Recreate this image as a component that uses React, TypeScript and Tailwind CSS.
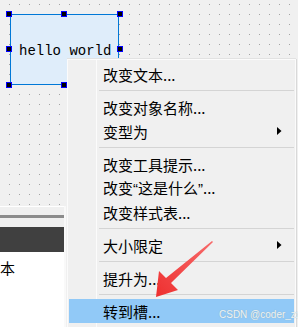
import React from "react";

type MenuEntry = { kind: "item"; label: React.ReactNode; submenu?: boolean; active?: boolean } | { kind: "sep" };

const q = "font-['Liberation_Sans',sans-serif]";

const menu: MenuEntry[] = [
  { kind: "item", label: "改变文本..." },
  { kind: "sep" },
  { kind: "item", label: "改变对象名称..." },
  { kind: "item", label: "变型为", submenu: true },
  { kind: "sep" },
  { kind: "item", label: "改变工具提示..." },
  {
    kind: "item",
    label: (
      <>
        改变<span className={q}>“</span>这是什么<span className={q}>”</span>...
      </>
    ),
  },
  { kind: "item", label: "改变样式表..." },
  { kind: "sep" },
  { kind: "item", label: "大小限定", submenu: true },
  { kind: "sep" },
  { kind: "item", label: "提升为..." },
  { kind: "sep" },
  { kind: "item", label: "转到槽...", active: true },
  { kind: "sep" },
];

const handles = [
  "left-[6px] top-[11px]",
  "left-[61px] top-[11px]",
  "left-[117px] top-[11px]",
  "left-[6px] top-[46px]",
  "left-[117px] top-[46px]",
  "left-[6px] top-[82px]",
  "left-[61px] top-[82px]",
  "left-[117px] top-[82px]",
];

export default function App() {
  return (
    <div className="relative h-[327px] w-[298px] overflow-hidden bg-[#f0f0f0] font-['Noto_Sans_CJK_SC',sans-serif]">
      {/* form canvas with dot grid */}
      <div className="h-[206px] w-full bg-[#a3a3a3] [background-image:linear-gradient(to_right,transparent_1px,#f0f0f0_1px),linear-gradient(to_bottom,transparent_1px,#f0f0f0_1px)] [background-size:10px_10px] [background-position:9px_4px]" />

      {/* lower dock panel */}
      <div className="flex h-[121px]">
        <div className="flex w-[66px] flex-col border-r-2 border-[#f9f9f9]">
          <div className="h-px bg-white" />
          <div className="h-[8px]" />
          <div className="h-[3px] bg-[#8c8c8c]" />
          <div className="h-[9px]" />
          <div className="h-[25px] bg-[#404040]" />
          <div className="flex-1 bg-white pt-[6px] text-[15px] leading-[20px] text-black">本</div>
        </div>
      </div>

      {/* selected label widget */}
      <div className="absolute left-[10px] top-[14px] flex h-[71px] w-[109px] items-center border border-[#0078d7] bg-[#dfedfa] pl-[8px] pt-[3px] font-['Liberation_Mono',monospace] text-[14px] text-black">
        hello world
      </div>
      {handles.map((h) => (
        <div key={h} className={`absolute h-[6px] w-[6px] border border-[#0000ff] bg-black ${h}`} />
      ))}

      {/* context menu */}
      <div className="absolute left-[67px] top-[59px] w-[229px] border border-b-0 border-[#fbfbfb] bg-[#f0f0f0] pt-[2px] shadow-[1px_0_0_#d9d9d9,0_-1px_0_#e2e2e2]">
        <div className="absolute bottom-0 left-[28px] top-0 w-px bg-[#fbfbfb]" />
        {menu.map((m, i) =>
          m.kind === "sep" ? (
            <div key={i} className="relative flex h-[9px] items-center pl-[31px] pr-px">
              <div className="h-px w-full bg-[#d4d4d4]" />
            </div>
          ) : (
            <div
              key={i}
              className={`relative mx-px flex h-[24px] items-center pl-[34px] pr-[12px] text-[15px] text-black ${m.active ? "bg-[#91c9f7]" : ""}`}
            >
              <span className="flex-1 leading-none">{m.label}</span>
              {m.submenu && (
                <svg width="5" height="8" viewBox="0 0 5 8">
                  <path d="M0 0 L4.5 4 L0 8 Z" fill="#000" />
                </svg>
              )}
            </div>
          )
        )}
      </div>

      {/* red annotation arrow */}
      <svg className="absolute left-0 top-0" width="298" height="327" viewBox="0 0 298 327">
        <defs>
          <linearGradient id="ar" x1="213" y1="242" x2="156" y2="297" gradientUnits="userSpaceOnUse">
            <stop offset="0" stopColor="#f76a6a" />
            <stop offset="1" stopColor="#ee2f2f" />
          </linearGradient>
        </defs>
        <polygon points="213,242 171,283 178,290 156,297 159,271 166,278 212,241" fill="url(#ar)" />
      </svg>

      {/* watermark */}
      <div className="absolute left-[219px] top-[308px] whitespace-nowrap font-['Liberation_Sans',sans-serif] text-[10px] leading-[13px] text-[#eef3f9] [text-shadow:0_0_1px_#8aa]">
        CSDN @coder_zzj
      </div>
    </div>
  );
}
